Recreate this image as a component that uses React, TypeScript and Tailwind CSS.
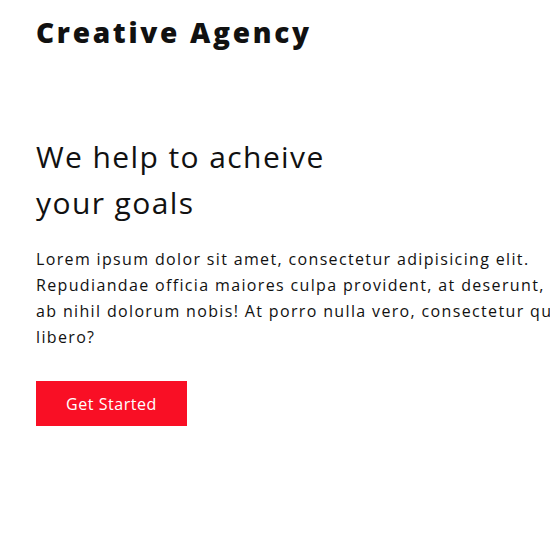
export default function App() {
  return (
    <div
      className="w-[550px] h-[550px] overflow-hidden bg-white text-[#111111]"
      style={{ fontFamily: '"Open Sans", "Liberation Sans", sans-serif' }}
    >
      <div className="pl-9 pt-[12px]">
        <h1 className="text-[28px] leading-[40px] font-extrabold tracking-[2.7px]">Creative Agency</h1>

        <h2 className="mt-[82px] text-[30px] leading-[46px] font-normal tracking-[1.4px]">
          We help to acheive
          <br />
          your goals
        </h2>

        <p className="mt-[20px] w-[640px] text-[16px] leading-[26px] tracking-[1.35px] whitespace-nowrap">
          Lorem ipsum dolor sit amet, consectetur adipisicing elit.
          <br />
          Repudiandae officia maiores culpa provident, at deserunt,
          <br />
          ab nihil dolorum nobis! At porro nulla vero, consectetur quia
          <br />
          libero?
        </p>

        <button
          type="button"
          className="mt-[31px] w-[151px] h-[45px] bg-[#f90f25] text-white text-[16px] tracking-[0.55px]"
        >
          Get Started
        </button>
      </div>
    </div>
  );
}
